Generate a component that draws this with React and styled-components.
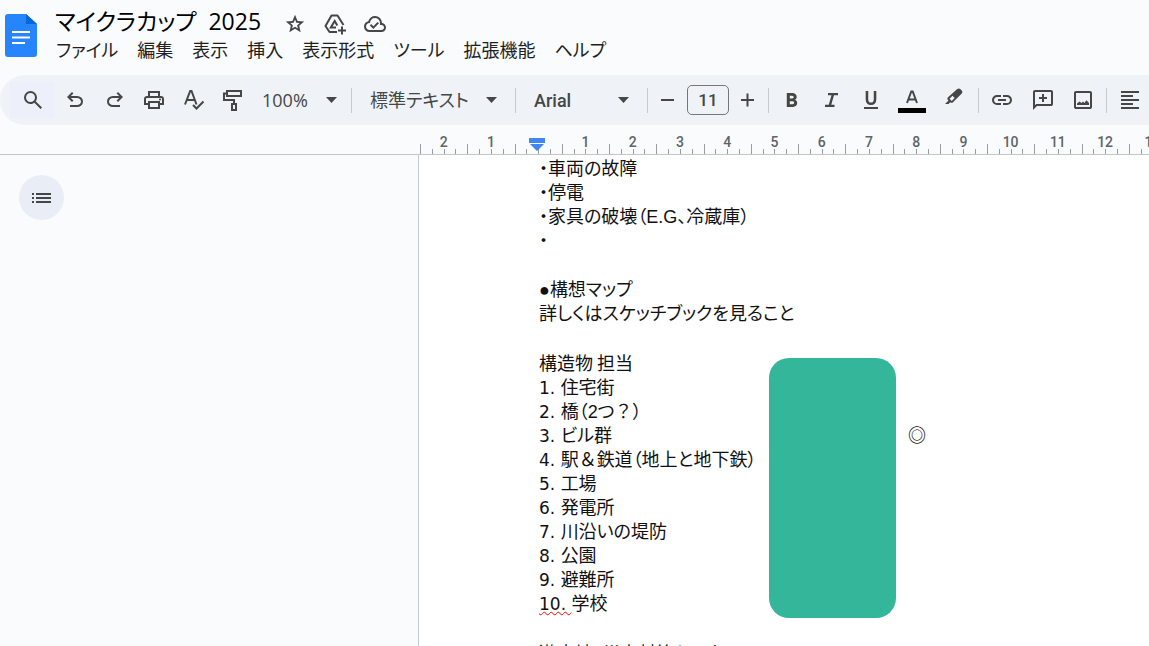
import React from 'react';
import styled, { createGlobalStyle } from 'styled-components';

const GlobalStyle = createGlobalStyle`
  * {
    box-sizing: border-box;
  }
  body {
    margin: 0;
    overflow: hidden;
    background: #f9fbfd;
    color: #1f1f1f;
    font-family: 'Open Sans', 'Noto Sans CJK JP', sans-serif;
    font-feature-settings: 'palt';
  }
  button,
  input,
  select {
    margin: 0;
    padding: 0;
    border: 0;
    background: none;
    color: inherit;
    font: inherit;
    font-feature-settings: inherit;
  }
`;

const Page = styled.div`
  display: flex;
  flex-direction: column;
  height: 100vh;
  overflow: hidden;
`;

const Header = styled.header`
  display: flex;
  flex: none;
  height: 75px;
  padding-left: 5px;
`;

const DocsLink = styled.a`
  flex: none;
  width: 32px;
  height: 44px;
  margin: 14px 18px 0 0;
`;

const HeaderText = styled.div`
  display: flex;
  flex-direction: column;
  padding-top: 5px;
`;

const TitleRow = styled.div`
  display: flex;
  align-items: flex-start;
  height: 33px;
`;

const Title = styled.h1`
  margin: 0 14px 0 0;
  color: #000;
  font-size: 23px;
  font-weight: 400;
  line-height: 32px;
  white-space: pre;
`;

const TitleButton = styled.button`
  display: flex;
  align-items: center;
  justify-content: center;
  width: 40px;
  height: 33px;
  padding-top: 4px;
  color: #444746;
`;

const Menu = styled.nav`
  display: flex;
  gap: 19px;
  padding-left: 1px;
`;

const MenuButton = styled.button`
  font-size: 18px;
  line-height: 24px;
  white-space: nowrap;
`;

const Toolbar = styled.div`
  display: flex;
  flex: none;
  align-items: center;
  height: 50px;
  padding-left: 10px;
  border-radius: 25px 0 0 25px;
  background: #eff2f7;
  color: #444746;
  font-size: 18px;
  overflow: hidden;
`;

const ToolButton = styled.button`
  display: flex;
  flex: none;
  align-items: center;
  justify-content: center;
  width: ${({ $width }) => $width || 40}px;
  height: 36px;
  background: ${({ $lit }) => ($lit ? '#edf0fa' : 'none')};
`;

const Tools = styled.div`
  display: flex;
  flex: none;
`;

const Divider = styled.span`
  flex: none;
  width: 1px;
  height: 25px;
  background: #c7cacd;
`;

const Picker = styled.label`
  display: flex;
  flex: none;
  align-items: center;
  width: ${({ $width }) => $width}px;
  padding: 0 ${({ $end }) => $end || 18}px 0 ${({ $inset }) => $inset || 18}px;

  select {
    flex: 1;
    min-width: 0;
    height: 32px;
    appearance: none;
  }
`;

const FontPicker = styled(Picker)`
  font-family: Roboto, sans-serif;
  font-weight: 500;
`;

const SizeInput = styled.input`
  flex: none;
  width: 42px;
  height: 30px;
  border: 1px solid #747775;
  border-radius: 5px;
  font-family: Roboto, sans-serif;
  font-size: 17px;
  font-weight: 500;
  text-align: center;
`;

const Ruler = styled.div`
  display: flex;
  flex: none;
  height: 30px;
  padding-left: 420px;
  border-bottom: 1px solid #c4c7c5;
  overflow: hidden;
`;

const RulerTrack = styled.div`
  position: relative;
  display: grid;
  flex: none;
  grid-template-columns: repeat(16, 1fr);
  width: 756px;
`;

const RulerCell = styled.div`
  display: flex;
  flex-direction: column;
  justify-content: space-between;
  padding-top: 9px;
  border-bottom: 1px solid ${({ $active }) => ($active ? '#80868b' : 'transparent')};
  color: #5f6368;
  font-family: Roboto, sans-serif;
  font-size: 14px;
  font-weight: 500;
  line-height: 16px;
  text-align: center;
`;

const Ticks = styled.div`
  display: grid;
  grid-template-columns: repeat(4, 1fr);
  align-items: end;
  height: 10px;
  margin-top: -6px;
`;

const Tick = styled.i`
  width: 1px;
  height: ${({ $tall }) => ($tall ? 10 : 5)}px;
  background: #9a9da0;
`;

const IndentMarker = styled.svg`
  position: absolute;
  bottom: 2px;
  left: 109px;
`;

const Workspace = styled.div`
  display: flex;
  flex: 1;
  min-height: 0;
`;

const Outline = styled.aside`
  flex: none;
  width: 418px;
  padding: 20px 19px;
`;

const OutlineButton = styled.button`
  display: flex;
  align-items: center;
  justify-content: center;
  width: 45px;
  height: 45px;
  border-radius: 50%;
  background: #e9eef6;
  color: #444746;
`;

const Paper = styled.main`
  position: relative;
  flex: 1;
  padding-left: 120px;
  border-left: 1px solid #c9cccf;
  background: #fff;
  color: #111;
  font-family: 'Noto Sans CJK JP', sans-serif;
  font-size: 18px;
  overflow: hidden;
`;

const Line = styled.p`
  margin: 0;
  line-height: 24px;
  white-space: pre;
`;

const BlankLine = styled.div`
  height: ${({ $height }) => $height || 26}px;
`;

const Latin = styled.span`
  font-family: 'Liberation Sans', sans-serif;
  line-height: 1;
`;

const Count = styled.span`
  font-family: 'DejaVu Sans', sans-serif;
  font-size: 17px;
  line-height: 1;
`;

const Wide = styled.span`
  font-feature-settings: normal;
`;

const Misspelt = styled(Count)`
  text-decoration: underline wavy #f00 1px;
  text-underline-offset: 1px;
  text-decoration-skip-ink: none;
`;

const GreenBlock = styled.div`
  position: absolute;
  top: 203px;
  left: 350px;
  width: 127px;
  height: 260px;
  border-radius: 20px;
  background: #33b69a;
`;

const AssignMark = styled.span`
  position: absolute;
  top: 267px;
  left: 489px;
  font-weight: 500;
  line-height: 24px;
`;

const PATHS = {
  search:
    'M784-120 532-372q-30 24-69 38t-83 14q-109 0-184.5-75.5T120-580q0-109 75.5-184.5T380-840q109 0 184.5 75.5T640-580q0 44-14 83t-38 69l252 252-56 56ZM380-400q75 0 127.5-52.5T560-580q0-75-52.5-127.5T380-760q-75 0-127.5 52.5T200-580q0 75 52.5 127.5T380-400Z',
  undo:
    'M280-200v-80h284q63 0 109.5-40T720-420q0-60-46.5-100T564-560H312l104 104-56 56-200-200 200-200 56 56-104 104h252q97 0 166.5 63T800-420q0 94-69.5 157T564-200H280Z',
  redo:
    'M396-200q-97 0-166.5-63T160-420q0-94 69.5-157T396-640h252L544-744l56-56 200 200-200 200-56-56 104-104H396q-63 0-109.5 40T240-420q0 60 46.5 100T396-280h284v80H396Z',
  print:
    'M640-640v-120H320v120h-80v-200h480v200h-80Zm80 180q17 0 28.5-11.5T760-500q0-17-11.5-28.5T720-540q-17 0-28.5 11.5T680-500q0 17 11.5 28.5T720-460Zm-80 260v-160H320v160h320Zm80 80H240v-160H80v-240q0-51 35-85.5t85-34.5h560q51 0 85.5 34.5T880-520v240H720v160Zm80-240v-160q0-17-11.5-28.5T760-560H200q-17 0-28.5 11.5T160-520v160h80v-80h480v80h80Z',
  image:
    'M200-120q-33 0-56.5-23.5T120-200v-560q0-33 23.5-56.5T200-840h560q33 0 56.5 23.5T840-760v560q0 33-23.5 56.5T760-120H200Zm0-80h560v-560H200v560Zm40-80h480v-80l-100-110-90 110-50-60-60 60-80-60-100 80v60Z',
  comment:
    'M440-400h80v-120h120v-80H520v-120h-80v120H320v80h120v120ZM80-80v-720q0-33 23.5-56.5T160-880h640q33 0 56.5 23.5T880-800v480q0 33-23.5 56.5T800-240H240L80-80Zm126-240h594v-480H160v525l46-45Z',
  link:
    'M440-280H280q-83 0-141.500-58.500T80-480q0-83 58.500-141.500T280-680h160v80H280q-50 0-85 35t-35 85q0 50 35 85t85 35h160v80ZM320-440v-80h320v80H320Zm200 160v-80h160q50 0 85-35t35-85q0-50-35-85t-85-35H520v-80h160q83 0 141.500 58.500T880-480q0 83-58.500 141.500T680-280H520Z',
  align:
    'M120-120v-80h720v80H120Zm0-160v-80h480v80H120Zm0-160v-80h720v80H120Zm0-160v-80h480v80H120Zm0-160v-80h720v80H120Z',
  bold:
    'M272-200v-560h221q65 0 120 40t55 111q0 51-23 78.500T602-491q25 11 55.500 41t30.500 90q0 89-65 124.500T501-200H272Zm121-112h104q48 0 58.500-24.500T566-372q0-11-10.500-35.500T494-432H393v120Zm0-228h93q33 0 48-17t15-38q0-24-17-39t-44-15h-95v109Z',
  italic:
    'M200-200v-90h150l110-380H320v-90h400v90H560L450-290h130v90H200Z',
  underline:
    'M200-120v-80h560v80H200Zm280-160q-101 0-157-63t-56-167v-330h103v336q0 56 28 91t82 35q54 0 82-35t28-91v-336h103v330q0 104-56 167t-157 63Z',
  star:
    'm354-287 126-76 126 77-33-144 111-96-146-13-58-136-58 135-146 13 111 97-33 143ZM233-120l65-281L80-590l288-25 112-265 112 265 288 25-218 189 65 281-247-149-247 149Z',
  cloud:
    'm414-280 226-226-58-58-169 169-84-84-57 57 142 142ZM260-160q-91 0-155.500-63T40-377q0-78 47-139t123-78q25-92 100-149t170-57q117 0 198.500 81.500T760-520q69 8 114.500 59.500T920-340q0 75-52.500 127.500T740-160H260Zm0-80h480q42 0 71-29t29-71q0-42-29-71t-71-29h-60v-80q0-83-58.500-141.500T480-720q-83 0-141.500 58.500T280-520h-20q-58 0-99 41t-41 99q0 58 41 99t99 41Z',
};

function Glyph({ name, size = 24 }) {
  return (
    <svg width={size} height={size} viewBox="0 -960 960 960" fill="currentColor" aria-hidden="true">
      <path d={PATHS[name]} />
    </svg>
  );
}

function Stroke({ children, size = 24 }) {
  return (
    <svg
      width={size}
      height={size}
      viewBox="0 0 24 24"
      fill="none"
      stroke="currentColor"
      strokeWidth="2"
      aria-hidden="true"
    >
      {children}
    </svg>
  );
}

function Caret() {
  return (
    <svg width="11" height="6" viewBox="0 0 11 6" fill="#444746" aria-hidden="true">
      <path d="M0 0h11L5.500 6z" />
    </svg>
  );
}

function DocsLogo() {
  return (
    <svg width="32" height="44" viewBox="0 0 32 44" aria-hidden="true">
      <path d="M3 0h18l11 10v30a3 3 0 0 1-3 3H3a3 3 0 0 1-3-3V3a3 3 0 0 1 3-3z" fill="#2684fc" />
      <path d="M21 0l11 10H21z" fill="#0066da" />
      <path d="M7 18h18M7 23.500h18M7 29h13" stroke="#fff" strokeWidth="2" />
    </svg>
  );
}

const menus = ['ファイル', '編集', '表示', '挿入', '表示形式', 'ツール', '拡張機能', 'ヘルプ'];
const marks = [2, 1, 0, 1, 2, 3, 4, 5, 6, 7, 8, 9, 10, 11, 12, 13];

export default function App() {
  return (
    <Page>
      <GlobalStyle />
      <Header>
        <DocsLink href="#" aria-label="Docs">
          <DocsLogo />
        </DocsLink>
        <HeaderText>
          <TitleRow>
            <Title>マイクラカップ  2025</Title>
            <TitleButton aria-label="star">
              <Glyph name="star" size={22} />
            </TitleButton>
            <TitleButton aria-label="drive">
              <Stroke>
                <path d="M14 20H6.500L2.500 14 8.500 3.500h6L20.500 13" strokeLinejoin="round" />
                <path d="M13 15.500H7.800L11.700 9l2.600 4.500" />
                <path d="M19 14.500v8M15 18.500h8" />
              </Stroke>
            </TitleButton>
            <TitleButton aria-label="cloud">
              <Glyph name="cloud" />
            </TitleButton>
          </TitleRow>
          <Menu>
            {menus.map(label => (
              <MenuButton key={label}>{label}</MenuButton>
            ))}
          </Menu>
        </HeaderText>
      </Header>

      <Toolbar>
        <ToolButton $width={45} $lit aria-label="search">
          <Glyph name="search" />
        </ToolButton>
        <Tools>
          <ToolButton aria-label="undo">
            <Glyph name="undo" />
          </ToolButton>
          <ToolButton $width={39} aria-label="redo">
            <Glyph name="redo" />
          </ToolButton>
          <ToolButton aria-label="print">
            <Glyph name="print" />
          </ToolButton>
          <ToolButton $width={39} aria-label="spelling">
            <Stroke>
              <path d="M3 16.500L8.200 3h1.300L14.500 16.500M5 12h8" />
              <path d="M11 17l3.500 3.500 7-7" />
            </Stroke>
          </ToolButton>
          <ToolButton $width={39} aria-label="paint format">
            <Stroke>
              <path d="M6 3h14v5H6z" />
              <path d="M6 5.500H3V12h10v4" />
              <path d="M11 16h4v6h-4z" />
            </Stroke>
          </ToolButton>
        </Tools>
        <Picker $width={99} $inset={10} $end={14}>
          <select aria-label="zoom">
            <option>100%</option>
          </select>
          <Caret />
        </Picker>
        <Divider />
        <Picker $width={163}>
          <select aria-label="style">
            <option>標準テキスト</option>
          </select>
          <Caret />
        </Picker>
        <Divider />
        <FontPicker $width={131}>
          <select aria-label="font">
            <option>Arial</option>
          </select>
          <Caret />
        </FontPicker>
        <Divider />
        <ToolButton $width={39} aria-label="smaller">
          <Stroke>
            <path d="M5 12h13" />
          </Stroke>
        </ToolButton>
        <SizeInput aria-label="font size" defaultValue="11" />
        <ToolButton $width={39} aria-label="larger">
          <Stroke>
            <path d="M4 12h13M10.500 5.500v13" />
          </Stroke>
        </ToolButton>
        <Divider />
        <ToolButton $width={45} aria-label="bold">
          <Glyph name="bold" />
        </ToolButton>
        <ToolButton $width={36} aria-label="italic">
          <Glyph name="italic" />
        </ToolButton>
        <ToolButton $width={42} aria-label="underline">
          <Glyph name="underline" />
        </ToolButton>
        <ToolButton aria-label="text colour">
          <svg width="28" height="28" viewBox="0 0 28 28" aria-hidden="true">
            <path d="M9 17l4.300-11.500h1.400L19 17M10.500 13.500h7" fill="none" stroke="#444746" strokeWidth="2" />
            <path d="M0 22h28v5H0z" fill="#000" />
          </svg>
        </ToolButton>
        <ToolButton $width={46} aria-label="highlight">
          <svg width="24" height="24" viewBox="0 0 24 24" fill="currentColor" aria-hidden="true">
            <path
              fillRule="evenodd"
              d="M2 16l3.500-3.500-.500-.500a2 2 0 0 1 0-2.700L14 1.300a2.500 2.500 0 0 1 3.500 0l1 1a2.500 2.500 0 0 1 0 3.500L10 14.200a2 2 0 0 1-2.700 0L5.500 16zM9.500 7.800l-3 3 2.200 2.200 3-3z"
            />
          </svg>
        </ToolButton>
        <Divider />
        <ToolButton $width={46} aria-label="link">
          <Glyph name="link" />
        </ToolButton>
        <ToolButton $width={35} aria-label="comment">
          <Glyph name="comment" />
        </ToolButton>
        <ToolButton $width={46} aria-label="image">
          <Glyph name="image" />
        </ToolButton>
        <Divider />
        <ToolButton $width={45} aria-label="align">
          <Glyph name="align" />
        </ToolButton>
        <Caret />
      </Toolbar>

      <Ruler>
        <RulerTrack>
          {marks.map((mark, i) => (
            <RulerCell key={i} $active={i > 2}>
              <span>{mark || '\u00a0'}</span>
              <Ticks>
                <Tick $tall />
                <Tick />
                <Tick />
                <Tick />
              </Ticks>
            </RulerCell>
          ))}
          <IndentMarker width="16" height="14" viewBox="0 0 16 14" fill="#4285f4" aria-hidden="true">
            <path d="M0 0h16v5H0zM1 6h14L8 13z" />
          </IndentMarker>
        </RulerTrack>
      </Ruler>

      <Workspace>
        <Outline>
          <OutlineButton aria-label="outline">
            <Stroke>
              <path d="M6 8h15M6 12h15M6 16h15" />
              <path d="M2 8h2M2 12h2M2 16h2" />
            </Stroke>
          </OutlineButton>
        </Outline>
        <Paper>
          <Line>・車両の故障</Line>
          <Line>・停電</Line>
          <Line>
            ・家具の破壊（<Latin>E.G</Latin>、冷蔵庫）
          </Line>
          <Line>・</Line>
          <BlankLine $height={25} />
          <Line>
            <Latin>●</Latin>構想マップ
          </Line>
          <Line>詳しくはスケッチブックを見ること</Line>
          <BlankLine />
          <Line>構造物 担当</Line>
          <Line>
            <Count>1. </Count>住宅街
          </Line>
          <Line>
            <Count>2. </Count>橋（<Latin>2</Latin>つ<Wide>？</Wide>）
          </Line>
          <Line>
            <Count>3. </Count>ビル群
          </Line>
          <Line>
            <Count>4. </Count>駅<Wide>＆</Wide>鉄道（地上と地下鉄）
          </Line>
          <Line>
            <Count>5. </Count>工場
          </Line>
          <Line>
            <Count>6. </Count>発電所
          </Line>
          <Line>
            <Count>7. </Count>川沿いの堤防
          </Line>
          <Line>
            <Count>8. </Count>公園
          </Line>
          <Line>
            <Count>9. </Count>避難所
          </Line>
          <Line>
            <Misspelt>10. </Misspelt>学校
          </Line>
          <BlankLine />
          <Line>遊水地・災害対策センター</Line>
          <GreenBlock />
          <AssignMark>◎</AssignMark>
        </Paper>
      </Workspace>
    </Page>
  );
}
